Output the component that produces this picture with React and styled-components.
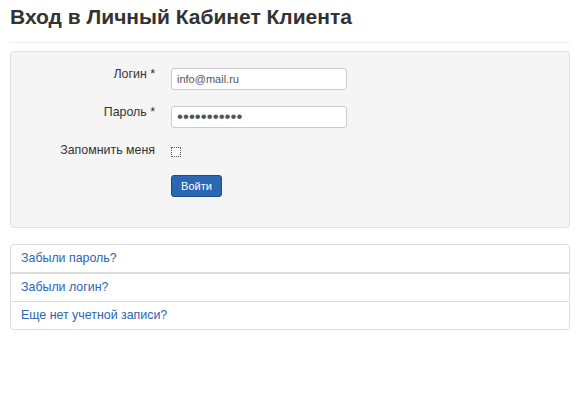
import React from "react";
import styled, { createGlobalStyle } from "styled-components";

const GlobalStyle = createGlobalStyle`
	body {
		margin: 0;
		background: #fff;
		font-family: "Liberation Sans", Arial, sans-serif;
		color: #333;
	}
`;

const Page = styled.div`
	padding: 0 12px 0 10px;
`;

const Title = styled.h1`
	margin: 5px 0 0;
	font-size: 21px;
	line-height: 24px;
	font-weight: bold;
	color: #333;
`;

const Divider = styled.hr`
	margin: 13px 0 8px;
	border: 0;
	border-top: 1px solid #eee;
	height: 0;
`;

const Well = styled.form`
	background: #f5f5f5;
	border: 1px solid #e0e0e0;
	border-radius: 4px;
	padding: 16px 0 30px;
	display: flex;
	flex-direction: column;
`;

const Row = styled.div`
	display: grid;
	grid-template-columns: 144px 176px;
	column-gap: 16px;
	align-items: start;
	margin-bottom: ${(p) => p.$mb || 0}px;
`;

const Label = styled.label`
	text-align: right;
	font-size: 12.4px;
	line-height: 12px;
	color: #333;
	margin-top: ${(p) => p.$mt || 0}px;
`;

const Input = styled.input`
	box-sizing: border-box;
	width: 176px;
	height: 22px;
	margin: 0;
	padding: 0 5px;
	border: 1px solid #ccc;
	border-radius: 3px;
	background: #fff;
	font-family: "Liberation Sans", Arial, sans-serif;
	font-size: ${(p) => (p.type === "password" ? "17px" : "11px")};
	color: #555;
	outline: none;
`;

const Check = styled.input`
	appearance: none;
	box-sizing: border-box;
	width: 10px;
	height: 10px;
	margin: 5px 0 0;
	border: 1px dotted #555;
	background: #fff;
`;

const Button = styled.button`
	box-sizing: border-box;
	width: 51px;
	height: 22px;
	padding: 0;
	border: 1px solid #1d4c88;
	border-radius: 3px;
	background: #2b67b2;
	color: #fff;
	font-family: "Liberation Sans", Arial, sans-serif;
	font-size: 11px;
	cursor: pointer;
`;

const LinkList = styled.ul`
	list-style: none;
	margin: 16px 0 0;
	padding: 0;
	border: 1px solid #ddd;
	border-radius: 4px;
`;

const LinkItem = styled.li`
	height: 27px;
	line-height: 27px;
	padding: 0 10px;
	font-size: 12.4px;
	border-bottom: ${(p) => (p.$last ? "none" : `${p.$thick ? 2 : 1}px solid #ddd`)};

	a {
		color: #2b64b4;
		text-decoration: none;
	}
`;

const links = [
	{ text: "Забыли пароль?", thick: true },
	{ text: "Забыли логин?" },
	{ text: "Еще нет учетной записи?", last: true },
];

const App = () => (
	<Page>
		<GlobalStyle />
		<Title>Вход в Личный Кабинет Клиента</Title>
		<Divider />
		<Well onSubmit={(e) => e.preventDefault()}>
			<Row $mb={16}>
				<Label>Логин *</Label>
				<Input type="text" defaultValue="info@mail.ru" />
			</Row>
			<Row $mb={14}>
				<Label>Пароль *</Label>
				<Input type="password" defaultValue="12345678901" />
			</Row>
			<Row $mb={18}>
				<Label $mt={2}>Запомнить меня</Label>
				<Check type="checkbox" />
			</Row>
			<Row>
				<span />
				<div>
					<Button type="submit">Войти</Button>
				</div>
			</Row>
		</Well>
		<LinkList>
			{links.map((l) => (
				<LinkItem key={l.text} $thick={l.thick} $last={l.last}>
					<a href="#">{l.text}</a>
				</LinkItem>
			))}
		</LinkList>
	</Page>
);

export default App;
